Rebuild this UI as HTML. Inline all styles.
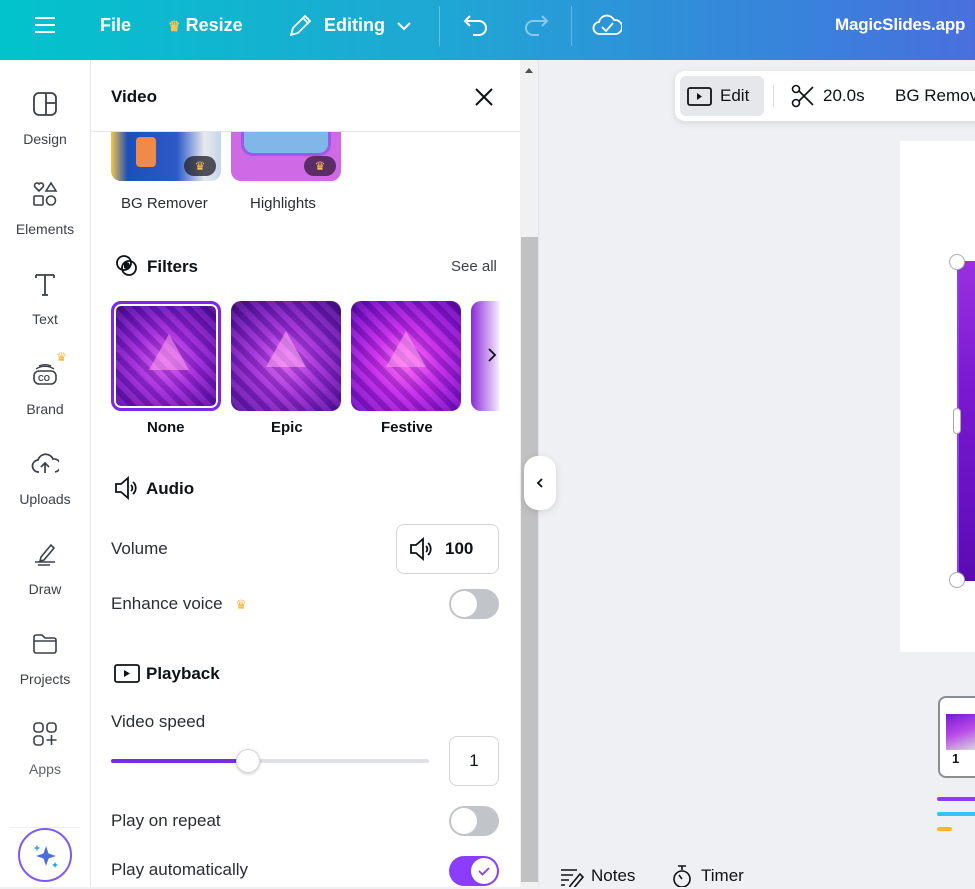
<!DOCTYPE html>
<html><head><meta charset="utf-8"><style>
*{box-sizing:border-box;margin:0;padding:0}
body{width:975px;height:887px;overflow:hidden;font-family:"Liberation Sans",sans-serif;background:#eff0f3;position:relative;color:#0d1216}
.a{position:absolute}
.top{left:0;top:0;width:975px;height:60px;background:linear-gradient(90deg,#02c3cc 0%,#1fa7d4 45%,#3b7fdc 85%,#4a6fdd 100%);color:#fff;font-weight:bold;font-size:18px}
.top .a{top:14px}
.side{left:0;top:60px;width:91px;height:827px;background:#fff;border-right:1px solid #e6e6e9}
.si{position:absolute;left:0;width:90px;text-align:center;font-size:14px;color:#3c4048}
.si svg{display:block;margin:0 auto 14px}
.panel{left:91px;top:60px;width:429px;height:827px;background:#fff}
.lbl{font-size:17px;color:#2a2d33}
.h{font-size:17px;font-weight:bold}
.tog{width:50px;height:30px;border-radius:15px;background:#c1c5ca}
.tog i{position:absolute;left:2px;top:2px;width:26px;height:26px;border-radius:50%;background:#fff}
.thumb{width:110px;height:110px;border-radius:10px;background:repeating-linear-gradient(45deg,rgba(60,0,120,.25) 0 6px,rgba(255,120,255,.12) 6px 12px),radial-gradient(circle at 50% 55%,#d85cf0 0%,#9a2ad8 40%,#5a12a8 80%,#3a0a70 100%)}
.tri{position:absolute;left:35px;top:30px;width:0;height:0;border-left:20px solid transparent;border-right:20px solid transparent;border-bottom:36px solid rgba(255,160,240,.55)}
</style></head><body>
<div class="a top">
 <svg class="a" style="left:34px;top:16px" width="22" height="18"><path d="M1 2h20M1 9h20M1 16h20" stroke="#fff" stroke-width="2"/></svg>
 <div class="a" style="left:100px;top:15px">File</div>
 <div class="a" style="left:168px;top:15px"><span style="color:#ffc34d;font-size:14px">♛</span> Resize</div>
 <svg class="a" style="left:287px;top:13px" width="26" height="26"><path d="M4 22l2-7L18 3l5 5-12 12z M16 5l5 5" stroke="#fff" stroke-width="1.8" fill="none"/></svg>
 <div class="a" style="left:324px;top:15px">Editing</div>
 <svg class="a" style="left:396px;top:20px" width="16" height="12"><path d="M2 3l6 6 6-6" stroke="#fff" stroke-width="2" fill="none"/></svg>
 <div class="a" style="left:439px;top:6px;width:1px;height:40px;background:rgba(255,255,255,.3)"></div>
 <svg class="a" style="left:462px;top:12px" width="28" height="26"><path d="M8 4L3 9l5 5M3 9h14a7 7 0 010 14h-6" stroke="#fff" stroke-width="2" fill="none"/></svg>
 <svg class="a" style="left:522px;top:12px" width="28" height="26"><path d="M20 4l5 5-5 5M25 9H11a7 7 0 000 14h6" stroke="rgba(255,255,255,.45)" stroke-width="2" fill="none"/></svg>
 <div class="a" style="left:571px;top:6px;width:1px;height:40px;background:rgba(255,255,255,.3)"></div>
 <svg class="a" style="left:592px;top:12px" width="30" height="26"><path d="M8 22a6 6 0 01-1-12 8 8 0 0115-2 6 6 0 012 14z" stroke="#fff" stroke-width="1.8" fill="none"/><path d="M10 15l4 4 7-8" stroke="#fff" stroke-width="1.8" fill="none"/></svg>
 <div class="a" style="left:835px;top:15px;font-size:17px;letter-spacing:-0.2px">MagicSlides.app</div>
</div>

<div class="a side">
 <div class="si" style="top:31px"><svg width="26" height="26"><rect x="2" y="2" width="22" height="22" rx="5" fill="none" stroke="#3c4048" stroke-width="1.8"/><path d="M14 2v22M14 12h10" stroke="#3c4048" stroke-width="1.8"/></svg>Design</div>
 <div class="si" style="top:121px"><svg width="26" height="26"><path d="M7 10l-4-4a2.5 2.5 0 014-3 2.5 2.5 0 014 3z" fill="none" stroke="#3c4048" stroke-width="1.6"/><path d="M19 2l5 8h-10z" fill="none" stroke="#3c4048" stroke-width="1.6"/><rect x="2" y="15" width="9" height="9" rx="1" fill="none" stroke="#3c4048" stroke-width="1.6"/><circle cx="19" cy="19.5" r="4.5" fill="none" stroke="#3c4048" stroke-width="1.6"/></svg>Elements</div>
 <div class="si" style="top:211px"><svg width="26" height="26"><path d="M4 4h18M13 4v20M4 4v3M22 4v3M10 24h6" stroke="#3c4048" stroke-width="1.8" fill="none"/></svg>Text</div>
 <div class="si" style="top:301px"><span class="a" style="left:56px;top:-11px;color:#ffb33a;font-size:12px">♛</span><svg width="26" height="26"><rect x="2" y="10" width="22" height="13" rx="5" fill="none" stroke="#3c4048" stroke-width="1.6"/><path d="M4 8a12 8 0 0118 0M7 5a9 5 0 0112 0" stroke="#3c4048" stroke-width="1.4" fill="none"/><text x="6" y="20" font-size="8" font-weight="bold" fill="#3c4048" font-family="Liberation Sans">CO</text></svg>Brand</div>
 <div class="si" style="top:391px"><svg width="28" height="26"><path d="M8 21a6 6 0 01-1-12 8 8 0 0115-1 6 6 0 012 13" stroke="#3c4048" stroke-width="1.7" fill="none"/><path d="M14 22v-9M10 16l4-4 4 4" stroke="#3c4048" stroke-width="1.7" fill="none"/></svg>Uploads</div>
 <div class="si" style="top:481px"><svg width="26" height="26"><path d="M9 16l10-12 3 3-10 12-4 1z" stroke="#3c4048" stroke-width="1.6" fill="none"/><path d="M3 21h20M6 24h12" stroke="#3c4048" stroke-width="1.6"/></svg>Draw</div>
 <div class="si" style="top:571px"><svg width="26" height="26"><path d="M2 6a2 2 0 012-2h6l3 3h9a2 2 0 012 2v11a2 2 0 01-2 2H4a2 2 0 01-2-2z M2 10h22" stroke="#3c4048" stroke-width="1.6" fill="none"/></svg>Projects</div>
 <div class="si" style="top:661px;color:#5e6269"><svg width="26" height="26"><rect x="2" y="2" width="9" height="9" rx="3" fill="none" stroke="#3c4048" stroke-width="1.6"/><rect x="15" y="2" width="9" height="9" rx="3" fill="none" stroke="#3c4048" stroke-width="1.6"/><rect x="2" y="15" width="9" height="9" rx="3" fill="none" stroke="#3c4048" stroke-width="1.6"/><path d="M19.5 14v10M14.5 19h10" stroke="#3c4048" stroke-width="1.6"/></svg>Apps</div>
 <div class="a" style="left:10px;top:767px;width:70px;height:1px;background:#eee"></div>
 <div class="a" style="left:18px;top:768px;width:54px;height:54px;border-radius:50%;border:2px solid #7d5bf0;background:#fff"><svg class="a" style="left:12px;top:12px" width="28" height="28"><path d="M14 4l2.5 7.5L24 14l-7.5 2.5L14 24l-2.5-7.5L4 14l7.5-2.5z" fill="#4a6fdd"/><path d="M5 3l1 2 2 1-2 1-1 2-1-2-2-1 2-1z M23 20l1 2 2 1-2 1-1 2-1-2-2-1 2-1z" fill="#2aa6e0"/></svg></div>
</div>

<div class="a panel">
 <div class="a h" style="left:20px;top:27px">Video</div>
 <svg class="a" style="left:383px;top:27px" width="20" height="20"><path d="M2 2l16 16M18 2L2 18" stroke="#0d1216" stroke-width="2"/></svg>
 <div class="a" style="left:0;top:71px;width:429px;height:1px;background:#e5e6e9"></div>
 <div class="a" style="left:20px;top:72px;width:110px;height:49px;border-radius:0 0 10px 10px;background:linear-gradient(90deg,#f4c64a 0,#1d4fb8 15%,#2c5ac8 60%,#e9e9ee 85%,#c3d4ec);overflow:hidden"><div class="a" style="left:25px;top:5px;width:20px;height:30px;background:#f08a4a;border-radius:4px"></div><div class="a" style="left:73px;top:24px;width:32px;height:20px;border-radius:10px;background:rgba(30,30,40,.75);color:#ffc34d;font-size:12px;text-align:center;line-height:20px">♛</div></div>
 <div class="a" style="left:140px;top:72px;width:110px;height:49px;border-radius:0 0 10px 10px;background:#cf6ae6;overflow:hidden"><div class="a" style="left:10px;top:0;width:90px;height:24px;border:3px solid #9c58e6;border-top:none;border-radius:0 0 12px 12px;background:#7fb8e8"></div><div class="a" style="left:73px;top:24px;width:32px;height:20px;border-radius:10px;background:rgba(60,30,70,.8);color:#ffc34d;font-size:12px;text-align:center;line-height:20px">♛</div></div>
 <div class="a lbl" style="left:30px;top:135px;font-size:15px">BG Remover</div>
 <div class="a lbl" style="left:159px;top:135px;font-size:15px">Highlights</div>

 <svg class="a" style="left:24px;top:194px" width="24" height="24"><circle cx="9" cy="9" r="7" fill="none" stroke="#0d1216" stroke-width="1.8"/><circle cx="14" cy="14" r="7" fill="none" stroke="#0d1216" stroke-width="1.8"/><path d="M9 14a5 5 0 005 0 5 5 0 000-5 5 5 0 00-5 0z" fill="#0d1216"/></svg>
 <div class="a h" style="left:56px;top:197px">Filters</div>
 <div class="a" style="left:360px;top:198px;font-size:15px;color:#3c4048">See all</div>
 <div class="a thumb" style="left:20px;top:241px;border:3px solid #7d2ae8;box-shadow:inset 0 0 0 2px #fff"><div class="tri"></div></div>
 <div class="a thumb" style="left:140px;top:241px;filter:saturate(.9) brightness(1.05)"><div class="tri"></div></div>
 <div class="a thumb" style="left:260px;top:241px;background:repeating-linear-gradient(45deg,rgba(60,0,120,.25) 0 6px,rgba(255,120,255,.12) 6px 12px),radial-gradient(circle at 50% 55%,#ff6ef5 0%,#c22ae8 40%,#7a12c8 80%,#4a0a90 100%)"><div class="tri"></div></div>
 <div class="a" style="left:380px;top:241px;width:28px;height:110px;border-radius:10px 0 0 10px;background:linear-gradient(90deg,#8a2ad8,rgba(220,180,250,.3))"></div>
 <svg class="a" style="left:396px;top:287px" width="10" height="16"><path d="M2 2l6 6-6 6" stroke="#0d1216" stroke-width="1.8" fill="none"/></svg>
 <div class="a" style="left:56px;top:359px;font-size:15px;font-weight:bold">None</div>
 <div class="a" style="left:180px;top:359px;font-size:15px;font-weight:bold">Epic</div>
 <div class="a" style="left:290px;top:359px;font-size:15px;font-weight:bold">Festive</div>

 <svg class="a" style="left:23px;top:416px" width="26" height="26"><path d="M2 8h5l7-6v20l-7-6H2z" fill="none" stroke="#0d1216" stroke-width="1.8"/><path d="M17 9a4 4 0 010 6M19 6a8 8 0 010 12" stroke="#0d1216" stroke-width="1.8" fill="none"/></svg>
 <div class="a h" style="left:55px;top:419px">Audio</div>
 <div class="a lbl" style="left:20px;top:479px">Volume</div>
 <div class="a" style="left:305px;top:464px;width:103px;height:50px;border:1px solid #d4d6da;border-radius:8px"><svg class="a" style="left:12px;top:12px" width="26" height="26"><path d="M2 8h5l7-6v20l-7-6H2z" fill="none" stroke="#0d1216" stroke-width="1.8"/><path d="M17 9a4 4 0 010 6M19 6a8 8 0 010 12" stroke="#0d1216" stroke-width="1.8" fill="none"/></svg><span class="a" style="left:48px;top:14px;font-size:17px;font-weight:bold">100</span></div>
 <div class="a lbl" style="left:20px;top:534px">Enhance voice <span style="color:#ffb33a;font-size:13px;margin-left:8px">♛</span></div>
 <div class="a tog" style="left:358px;top:529px"><i></i></div>

 <svg class="a" style="left:23px;top:604px" width="26" height="20"><rect x="1" y="1" width="24" height="17" rx="2" fill="none" stroke="#0d1216" stroke-width="1.8"/><path d="M10 6l6 3.5-6 3.5z" fill="#0d1216"/></svg>
 <div class="a h" style="left:55px;top:604px">Playback</div>
 <div class="a lbl" style="left:20px;top:652px">Video speed</div>
 <div class="a" style="left:20px;top:699px;width:318px;height:4px;border-radius:2px;background:#dfe1e4"></div>
 <div class="a" style="left:20px;top:699px;width:138px;height:4px;border-radius:2px;background:#7d2ae8"></div>
 <div class="a" style="left:145px;top:689px;width:24px;height:24px;border-radius:50%;background:#fff;border:1px solid #d4d6da;box-shadow:0 1px 3px rgba(0,0,0,.2)"></div>
 <div class="a" style="left:358px;top:676px;width:50px;height:50px;border:1px solid #d4d6da;border-radius:8px;text-align:center;line-height:48px;font-size:17px">1</div>
 <div class="a lbl" style="left:20px;top:751px">Play on repeat</div>
 <div class="a tog" style="left:358px;top:746px"><i></i></div>
 <div class="a lbl" style="left:20px;top:800px">Play automatically</div>
 <div class="a tog" style="left:358px;top:796px;background:#8b3dff"><i style="left:22px"><svg width="26" height="26"><path d="M8 13l3.5 3.5L18 10" stroke="#8b3dff" stroke-width="1.8" fill="none"/></svg></i></div>
</div>

<div class="a" style="left:520px;top:60px;width:19px;height:827px;background:#f1f1f1;border-right:1px solid #e2e3e6"></div>
<div class="a" style="left:525px;top:68px;width:0;height:0;border-left:4px solid transparent;border-right:4px solid transparent;border-bottom:5px solid #505050"></div>
<div class="a" style="left:521px;top:237px;width:17px;height:645px;background:#c1c1c1"></div>
<div class="a" style="left:524px;top:456px;width:32px;height:54px;border-radius:14px;background:#fff;box-shadow:0 2px 8px rgba(0,0,0,.12)"><svg class="a" style="left:11px;top:21px" width="10" height="12"><path d="M7 2L3 6l4 4" stroke="#0d1216" stroke-width="1.8" fill="none"/></svg></div>

<div class="a" style="left:675px;top:71px;width:320px;height:50px;border-radius:10px;background:#fff;box-shadow:0 2px 8px rgba(0,0,0,.1)">
 <div class="a" style="left:5px;top:5px;width:84px;height:40px;border-radius:6px;background:#e6e7ea"></div>
 <svg class="a" style="left:12px;top:16px" width="26" height="20"><rect x="1" y="1" width="23" height="17" rx="2" fill="none" stroke="#0d1216" stroke-width="1.8"/><path d="M10 6l5 3.5-5 3.5z" fill="#0d1216"/></svg>
 <div class="a" style="left:45px;top:15px;font-size:17px">Edit</div>
 <div class="a" style="left:98px;top:14px;width:1px;height:22px;background:#ddd"></div>
 <svg class="a" style="left:116px;top:13px" width="24" height="24"><circle cx="5" cy="5" r="3.5" fill="none" stroke="#0d1216" stroke-width="1.6"/><circle cx="5" cy="19" r="3.5" fill="none" stroke="#0d1216" stroke-width="1.6"/><path d="M8 7l14 14M8 17L22 3" stroke="#0d1216" stroke-width="1.6"/></svg>
 <div class="a" style="left:148px;top:15px;font-size:17px">20.0s</div>
 <div class="a" style="left:220px;top:15px;font-size:17px;white-space:nowrap">BG Remover</div>
</div>

<div class="a" style="left:900px;top:141px;width:75px;height:511px;background:#fff"></div>
<div class="a" style="left:957px;top:261px;width:18px;height:320px;background:linear-gradient(180deg,#9a30e0,#7a18d0 40%,#6610c0 80%,#5a0ab0);border-left:2px solid #8b3dff"></div>
<div class="a" style="left:949px;top:254px;width:16px;height:16px;border-radius:50%;background:#fff;border:1px solid #aaa"></div>
<div class="a" style="left:949px;top:572px;width:16px;height:16px;border-radius:50%;background:#fff;border:1px solid #aaa"></div>
<div class="a" style="left:953px;top:408px;width:8px;height:26px;border-radius:4px;background:#fff;border:1px solid #aaa"></div>

<div class="a" style="left:938px;top:696px;width:50px;height:82px;border-radius:8px;border:2px solid #8a8d92;background:#fff"></div>
<div class="a" style="left:946px;top:714px;width:30px;height:36px;background:linear-gradient(160deg,#7a18d0,#b84ae8 50%,#d8d8e0)"></div>
<div class="a" style="left:952px;top:751px;font-size:13px;font-weight:bold">1</div>
<div class="a" style="left:937px;top:797px;width:40px;height:4px;border-radius:2px;background:#8b3dff"></div>
<div class="a" style="left:937px;top:812px;width:40px;height:4px;border-radius:2px;background:#35c2f5"></div>
<div class="a" style="left:937px;top:827px;width:15px;height:4px;border-radius:2px;background:#ffb82e"></div>

<svg class="a" style="left:560px;top:866px" width="26" height="21"><path d="M1 4h16M1 9h12M1 14h8M1 19h4" stroke="#0d1216" stroke-width="1.6"/><path d="M10 20l10-12 3 3-10 12-4 1z" stroke="#0d1216" stroke-width="1.6" fill="none"/></svg>
<div class="a" style="left:591px;top:866px;font-size:17px">Notes</div>
<svg class="a" style="left:670px;top:864px" width="24" height="23"><path d="M8 2h8M12 2v4" stroke="#0d1216" stroke-width="1.6"/><circle cx="12" cy="15" r="8" fill="none" stroke="#0d1216" stroke-width="1.6"/><path d="M12 15l-3-4" stroke="#0d1216" stroke-width="1.6"/></svg>
<div class="a" style="left:701px;top:866px;font-size:17px">Timer</div>
</body></html>
